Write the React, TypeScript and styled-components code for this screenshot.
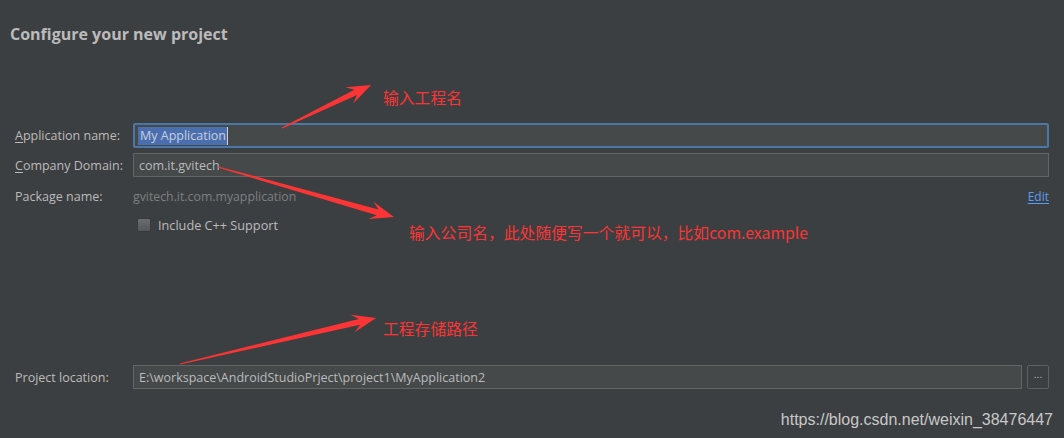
import React from 'react';
import styled, { createGlobalStyle } from 'styled-components';

const GlobalStyle = createGlobalStyle`
  html, body {
    margin: 0;
    padding: 0;
    background: #3c3f41;
  }
  * {
    box-sizing: border-box;
  }
`;

const Page = styled.div`
  position: relative;
  width: 1064px;
  height: 438px;
  overflow: hidden;
  background: #3c3f41;
  display: flex;
  flex-direction: column;
  font-family: 'Open Sans', 'Noto Sans', sans-serif;
  color: #bbbbbb;
`;

const Title = styled.h1`
  margin: 24px 0 0 10px;
  font-size: 16px;
  line-height: 20px;
  font-weight: 700;
  color: #bbbbbb;
`;

const Form = styled.div`
  display: flex;
  flex-direction: column;
  margin-top: 79px;
  padding: 0 15px;
`;

const Row = styled.div<{ $top?: number; $h?: number }>`
  display: grid;
  grid-template-columns: 118px 1fr auto;
  align-items: center;
  margin-top: ${(p) => p.$top ?? 0}px;
  height: ${(p) => p.$h ?? 24}px;
`;

const Label = styled.label`
  font-size: 12.5px;
  color: #bbbbbb;
  white-space: nowrap;
  u {
    text-decoration: underline;
    text-underline-offset: 2px;
  }
`;

const Field = styled.div<{ $focused?: boolean }>`
  grid-column: 2 / span 2;
  height: 100%;
  display: flex;
  align-items: center;
  padding-left: ${(p) => (p.$focused ? 3 : 5)}px;
  background: #45494a;
  border: ${(p) => (p.$focused ? '2px solid #4a76a8' : '1px solid #646464')};
  border-radius: ${(p) => (p.$focused ? 2 : 0)}px;
  font-size: 12.5px;
  color: #bbbbbb;
  white-space: nowrap;
`;

const Selected = styled.span`
  background: #4b6eaf;
  color: #c6cfdc;
  padding: 0 1px 0 2px;
  line-height: 18px;
  border-right: 1px solid #cfcfcf;
`;

const Muted = styled.span`
  font-size: 12.3px;
  color: #7d7f80;
`;

const EditLink = styled.a`
  font-size: 12px;
  color: #589df6;
  text-decoration: underline;
  text-underline-offset: 2px;
  cursor: pointer;
`;

const CheckRow = styled.label`
  grid-column: 2;
  display: flex;
  align-items: center;
  gap: 7px;
  padding-left: 4px;
  font-size: 12.7px;
  color: #bbbbbb;
`;

const Box = styled.span`
  width: 14px;
  height: 14px;
  border-radius: 2px;
  border: 1px solid #3a3a3a;
  background: linear-gradient(#6a6d6f, #55585a);
`;

const LocationWrap = styled.div`
  grid-column: 2 / span 2;
  display: flex;
  gap: 5px;
  height: 100%;
`;

const LocationField = styled(Field)`
  flex: 1;
`;

const BrowseButton = styled.button`
  width: 22px;
  height: 100%;
  padding: 0 0 6px;
  border: 1px solid #5e6162;
  border-radius: 2px;
  background: #3c3f41;
  color: #bbbbbb;
  font-size: 10px;
  font-family: 'Liberation Sans', sans-serif;
`;

const Overlay = styled.svg`
  position: absolute;
  left: 0;
  top: 0;
  pointer-events: none;
`;

const Note = styled.span<{ $x: number; $y: number }>`
  position: absolute;
  left: ${(p) => p.$x}px;
  top: ${(p) => p.$y}px;
  font-family: 'Noto Sans CJK SC', 'Noto Sans', sans-serif;
  font-size: 15.8px;
  line-height: 20px;
  color: #fb3535;
  white-space: nowrap;
`;

const Watermark = styled.span`
  position: absolute;
  right: 11px;
  bottom: 9px;
  font-family: 'Liberation Sans', Arial, sans-serif;
  font-size: 16px;
  color: #c8c8c8;
`;

const arrow = (x1: number, y1: number, x2: number, y2: number) => {
  const dx = x2 - x1;
  const dy = y2 - y1;
  const len = Math.hypot(dx, dy);
  const ux = dx / len;
  const uy = dy / len;
  const nx = -uy;
  const ny = ux;
  const headLen = 24;
  const neck = 17;
  const pt = (d: number, w: number) =>
    `${(x2 - ux * d + nx * w).toFixed(1)},${(y2 - uy * d + ny * w).toFixed(1)}`;
  return [
    `${(x1 + nx * 0.6).toFixed(1)},${(y1 + ny * 0.6).toFixed(1)}`,
    pt(neck, 3),
    pt(headLen, 9),
    pt(0, 0),
    pt(headLen, -9),
    pt(neck, -3),
    `${(x1 - nx * 0.6).toFixed(1)},${(y1 - ny * 0.6).toFixed(1)}`,
  ].join(' ');
};

const arrows = [
  [282, 128, 371, 85],
  [218, 167, 394, 217],
  [180, 364, 376, 318],
];

const App: React.FC = () => {
  return (
    <Page>
      <GlobalStyle />
      <Title>Configure your new project</Title>
      <Form>
        <Row $h={25}>
          <Label>
            <u>A</u>pplication name:
          </Label>
          <Field $focused>
            <Selected>My Application</Selected>
          </Field>
        </Row>
        <Row $top={5}>
          <Label>
            <u>C</u>ompany Domain:
          </Label>
          <Field>com.it.gvitech</Field>
        </Row>
        <Row $top={9} $h={20}>
          <Label>Package name:</Label>
          <Muted>gvitech.it.com.myapplication</Muted>
          <EditLink>Edit</EditLink>
        </Row>
        <Row $top={9} $h={20}>
          <CheckRow>
            <Box />
            Include C++ Support
          </CheckRow>
        </Row>
        <Row $top={130}>
          <Label>Project location:</Label>
          <LocationWrap>
            <LocationField>E:\workspace\AndroidStudioPrject\project1\MyApplication2</LocationField>
            <BrowseButton>...</BrowseButton>
          </LocationWrap>
        </Row>
      </Form>

      <Overlay width="1064" height="438" viewBox="0 0 1064 438">
        {arrows.map(([x1, y1, x2, y2], i) => (
          <polygon key={i} points={arrow(x1, y1, x2, y2)} fill="#fb3535" />
        ))}
      </Overlay>
      <Note $x={383} $y={88}>输入工程名</Note>
      <Note $x={409} $y={223}>输入公司名，此处随便写一个就可以，比如com.example</Note>
      <Note $x={383} $y={319}>工程存储路径</Note>
      <Watermark>https://blog.csdn.net/weixin_38476447</Watermark>
    </Page>
  );
};

export default App;
